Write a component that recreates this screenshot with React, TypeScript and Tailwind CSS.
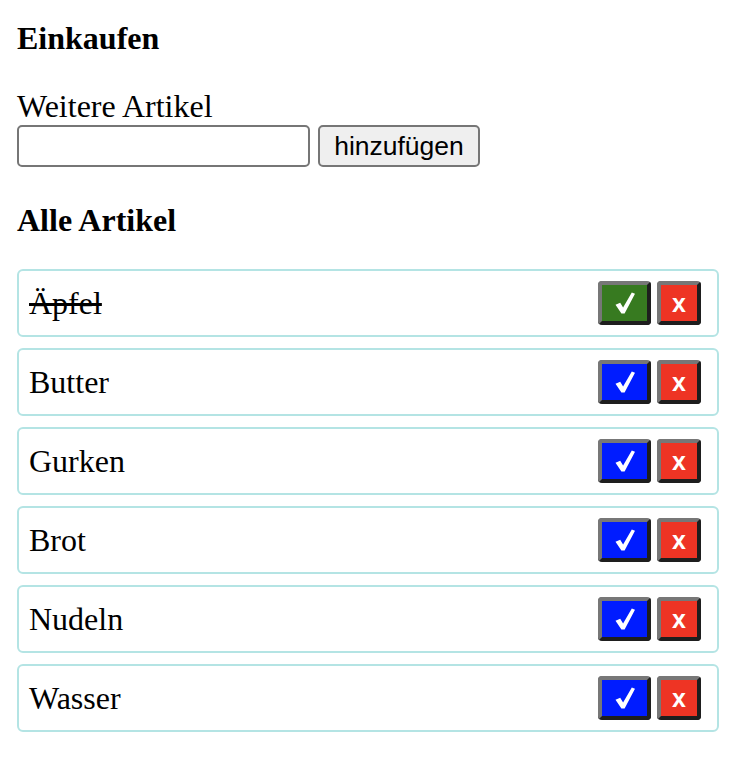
import React, { useState } from "react";

interface Item {
  id: number;
  name: string;
  done: boolean;
}

const start: Item[] = [
  { id: 1, name: "Äpfel", done: true },
  { id: 2, name: "Butter", done: false },
  { id: 3, name: "Gurken", done: false },
  { id: 4, name: "Brot", done: false },
  { id: 5, name: "Nudeln", done: false },
  { id: 6, name: "Wasser", done: false },
];

const Check = () => (
  <svg width="20" height="22" viewBox="0 0 20 22" fill="white">
    <path d="M0.5 12.8 L5.2 10.8 L8.1 15.4 L16.8 0.4 L20 1.8 L9.6 21.6 L6.4 21.6 Z" />
  </svg>
);

const App: React.FC = () => {
  const [items, setItems] = useState<Item[]>(start);
  const [text, setText] = useState("");

  const addItem = () => {
    if (!text.trim()) return;
    setItems([...items, { id: Date.now(), name: text.trim(), done: false }]);
    setText("");
  };

  const toggle = (id: number) =>
    setItems(items.map((i) => (i.id === id ? { ...i, done: !i.done } : i)));

  const remove = (id: number) => setItems(items.filter((i) => i.id !== id));

  return (
    <div className="min-h-[758px] bg-white pl-[17px] pr-[15px] pt-[20px] pb-6 font-['Liberation_Serif',serif] text-[32px] leading-[36px] text-black">
      <h4 className="font-bold">Einkaufen</h4>

      {/* Eingabe */}
      <div className="mt-[32px]">
        <label htmlFor="neu" className="block">Weitere Artikel</label>
        <div className="mt-[1px] flex items-center gap-[8px]">
          <input
            id="neu"
            type="text"
            value={text}
            onChange={(e) => setText(e.target.value)}
            className="h-[42px] w-[293px] rounded-[5px] border-2 border-[#767676] bg-white px-2 font-['Liberation_Sans',sans-serif] text-[26px] outline-none"
          />
          <button
            onClick={addItem}
            className="h-[42px] w-[162px] rounded-[5px] border-2 border-[#767676] bg-[#efefef] font-['Liberation_Sans',sans-serif] text-[26.5px] leading-none text-black"
          >
            hinzufügen
          </button>
        </div>
      </div>

      <h4 className="mt-[35px] font-bold">Alle Artikel</h4>

      {/* Liste */}
      <ul className="mt-[31px] flex flex-col gap-[11px]">
        {items.map((item) => (
          <li
            key={item.id}
            className="flex h-[68px] items-center justify-between rounded-[6px] border-2 border-[#b4e4e4] pl-[10px] pr-[16px]"
          >
            <span className={item.done ? "line-through" : ""}>{item.name}</span>
            <div className="flex gap-[6px]">
              <button
                onClick={() => toggle(item.id)}
                className={`flex h-[44px] w-[53px] items-center justify-center rounded-[4px] border-4 border-t-[#777777] border-l-[#777777] border-r-[#1e1e1e] border-b-[#1e1e1e] ${
                  item.done ? "bg-[#377a20]" : "bg-[#001cff]"
                }`}
              >
                <Check />
              </button>
              <button
                onClick={() => remove(item.id)}
                className="flex h-[44px] w-[44px] items-center justify-center rounded-[4px] border-4 border-t-[#777777] border-l-[#777777] border-r-[#1e1e1e] border-b-[#1e1e1e] bg-[#ee3424] font-['Liberation_Sans',sans-serif] text-[25px] font-bold leading-none text-white"
              >
                x
              </button>
            </div>
          </li>
        ))}
      </ul>
    </div>
  );
};

export default App;
